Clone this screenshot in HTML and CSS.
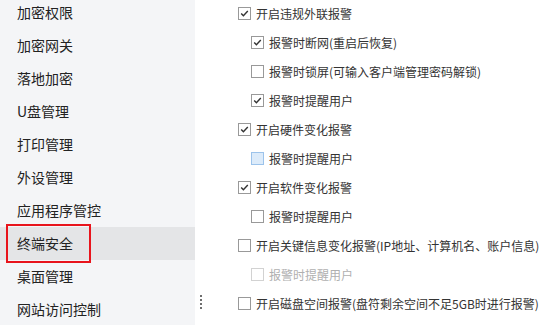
FILE: index.html
```html
<!DOCTYPE html>
<html lang="zh-CN">
  <head>
    <meta charset="UTF-8" />
    <title>终端安全</title>
    <link rel="stylesheet" href="styles.css">
  </head>
  <body>
    <div class="sidebar">
      <ul class="menu">
        <li>加密权限</li>
        <li>加密网关</li>
        <li>落地加密</li>
        <li>U盘管理</li>
        <li>打印管理</li>
        <li>外设管理</li>
        <li>应用程序管控</li>
        <li class="active">终端安全<span class="mark"></span></li>
        <li>桌面管理</li>
        <li>网站访问控制</li>
      </ul>
    </div>

    <div class="splitter">
      <div class="grip"><i></i><i></i><i></i><i></i></div>
    </div>

    <div class="content">
      <label class="opt"><span class="box on"><svg viewBox="0 0 13 13"><path d="M2.6 6.4 5.2 9.1 10.4 3.6" /></svg></span>开启违规外联报警</label>
      <label class="opt sub"><span class="box on"><svg viewBox="0 0 13 13"><path d="M2.6 6.4 5.2 9.1 10.4 3.6" /></svg></span>报警时断网(重启后恢复)</label>
      <label class="opt sub"><span class="box"></span>报警时锁屏(可输入客户端管理密码解锁)</label>
      <label class="opt sub"><span class="box on"><svg viewBox="0 0 13 13"><path d="M2.6 6.4 5.2 9.1 10.4 3.6" /></svg></span>报警时提醒用户</label>
      <label class="opt"><span class="box on"><svg viewBox="0 0 13 13"><path d="M2.6 6.4 5.2 9.1 10.4 3.6" /></svg></span>开启硬件变化报警</label>
      <label class="opt sub"><span class="box hover"></span>报警时提醒用户</label>
      <label class="opt"><span class="box on"><svg viewBox="0 0 13 13"><path d="M2.6 6.4 5.2 9.1 10.4 3.6" /></svg></span>开启软件变化报警</label>
      <label class="opt sub"><span class="box"></span>报警时提醒用户</label>
      <label class="opt"><span class="box"></span>开启关键信息变化报警(IP地址、计算机名、账户信息)</label>
      <label class="opt sub disabled"><span class="box"></span>报警时提醒用户</label>
      <label class="opt"><span class="box"></span>开启磁盘空间报警(盘符剩余空间不足5GB时进行报警)</label>
    </div>
  </body>
</html>
```

FILE: styles.css
```css
body {
  margin: 0;
  font-family: "Noto Sans CJK SC", "Noto Sans", sans-serif;
  background: #fff;
  display: flex;
  height: 325px;
  overflow: hidden;
}
/* 左侧菜单 */
.sidebar {
  width: 195px;
  flex-shrink: 0;
  background: #f4f5f7;
  overflow: hidden;
}
.menu {
  list-style: none;
  margin: -4px 0 0 0;
  padding: 0;
}
.menu li {
  height: 33px;
  line-height: 33px;
  padding-left: 17px;
  font-size: 14px;
  color: #222;
  position: relative;
}
.menu li.active {
  background: #e4e5e7;
}
/* 红色标注框 */
.mark {
  position: absolute;
  left: 6px;
  top: -3px;
  width: 81px;
  height: 35px;
  border: 2px solid #e8141c;
}
/* 分隔条 */
.splitter {
  width: 10px;
  flex-shrink: 0;
  display: flex;
  flex-direction: column;
  justify-content: flex-end;
  padding-bottom: 16px;
  box-sizing: border-box;
}
.grip {
  margin-left: 5px;
  display: flex;
  flex-direction: column;
  gap: 2px;
}
.grip i {
  width: 2px;
  height: 2px;
  background: #6e6e6e;
}
/* 右侧选项 */
.content {
  flex: 1;
  padding-left: 33px;
  margin-top: -1px;
}
.opt {
  display: flex;
  align-items: center;
  height: 29px;
  font-size: 12px;
  color: #333;
  white-space: nowrap;
}
.opt.sub {
  padding-left: 13px;
}
.opt.disabled {
  color: #b0b0b0;
}
.box {
  width: 11px;
  height: 11px;
  border: 1px solid #999;
  background: #fff;
  margin-right: 5px;
  flex-shrink: 0;
  display: flex;
}
.box svg {
  width: 11px;
  height: 11px;
}
.box path {
  fill: none;
  stroke: #333;
  stroke-width: 1.7;
}
.box.hover {
  background: #dcebfa;
  border-color: #9cc3eb;
}
.opt.disabled .box {
  border-color: #d2d2d2;
}
```
